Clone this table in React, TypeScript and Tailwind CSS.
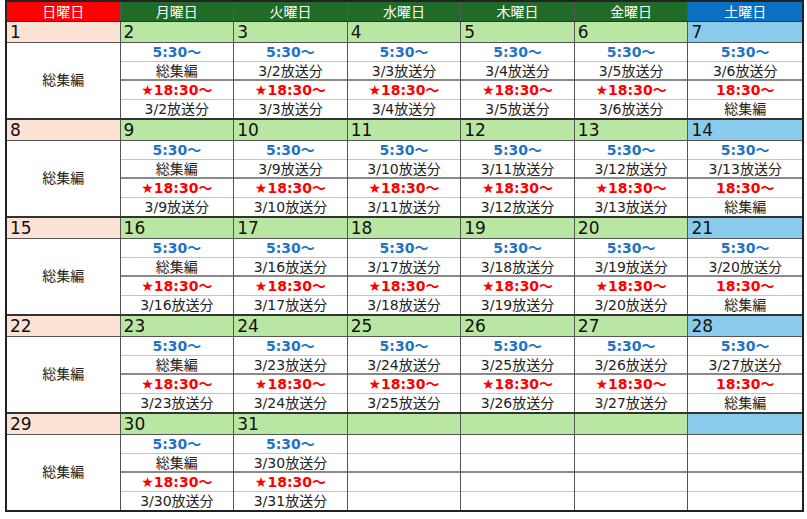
import React from "react";

const days = ["日曜日", "月曜日", "火曜日", "水曜日", "木曜日", "金曜日", "土曜日"];

const headBg = ["bg-[#fe0000]", "bg-[#1f6b27]", "bg-[#1f6b27]", "bg-[#1f6b27]", "bg-[#1f6b27]", "bg-[#1f6b27]", "bg-[#0b70c2]"];
const dateBg = ["bg-[#fde2d6]", "bg-[#b9e6a2]", "bg-[#b9e6a2]", "bg-[#b9e6a2]", "bg-[#b9e6a2]", "bg-[#b9e6a2]", "bg-[#8acbec]"];

type Lines = [string, string, string, string] | null;

function linesFor(col: number, d: number): Lines {
	if (d > 31) return null;
	if (col === 1) return ["5:30〜", "総集編", "★18:30〜", `3/${d}放送分`];
	if (col === 6) return ["5:30〜", `3/${d - 1}放送分`, "18:30〜", "総集編"];
	return ["5:30〜", `3/${d - 1}放送分`, "★18:30〜", `3/${d}放送分`];
}

function SubRows({ lines }: { lines: Lines }) {
	const cls = [
		"h-[19px] border-b border-[#c4c4c4] text-[#1f73c4] font-bold text-[14px]",
		"h-[19px] border-b-2 border-[#8a8a8a] text-[#222] text-[14px]",
		"h-[19px] border-b border-[#c4c4c4] text-[#fe0000] font-bold text-[14px]",
		"h-[18px] text-[#222] text-[14px]",
	];
	return (
		<div className="flex flex-col">
			{cls.map((c, i) => (
				<div key={i} className={`flex items-center justify-center leading-none whitespace-nowrap ${c}`}>
					{lines ? lines[i] : ""}
				</div>
			))}
		</div>
	);
}

function Week({ start, last }: { start: number; last: boolean }) {
	return (
		<div className={`grid grid-cols-7 ${last ? "" : "border-b-2 border-[#333]"}`}>
			{days.map((_, col) => {
				const d = start + col;
				const show = d <= 31;
				return (
					<div key={col} className={`flex flex-col ${col < 6 ? "border-r border-[#555]" : ""}`}>
						<div className={`h-[21px] border-b border-[#555] flex items-center pl-[3px] text-[17px] text-[#111] leading-none ${dateBg[col]}`}>
							{show ? d : ""}
						</div>
						{col === 0 ? (
							<div className="h-[75px] flex items-center justify-center text-[14px] text-[#222]">総集編</div>
						) : (
							<SubRows lines={linesFor(col, d)} />
						)}
					</div>
				);
			})}
		</div>
	);
}

export default function App() {
	return (
		<div className="w-[807px] h-[519px] bg-white" style={{ fontFamily: '"DejaVu Sans", "Noto Sans CJK JP", sans-serif' }}>
			<div className="ml-[5px] w-[799px] border-2 border-[#222]">
				<div className="grid grid-cols-7 border-b border-[#333]">
					{days.map((d, i) => (
						<div key={d} className={`h-[19px] flex items-center justify-center text-white text-[14px] leading-none ${headBg[i]} ${i < 6 ? "border-r border-[#555]" : ""}`}>
							{d}
						</div>
					))}
				</div>
				{[1, 8, 15, 22, 29].map((s) => (
					<Week key={s} start={s} last={s === 29} />
				))}
			</div>
		</div>
	);
}
